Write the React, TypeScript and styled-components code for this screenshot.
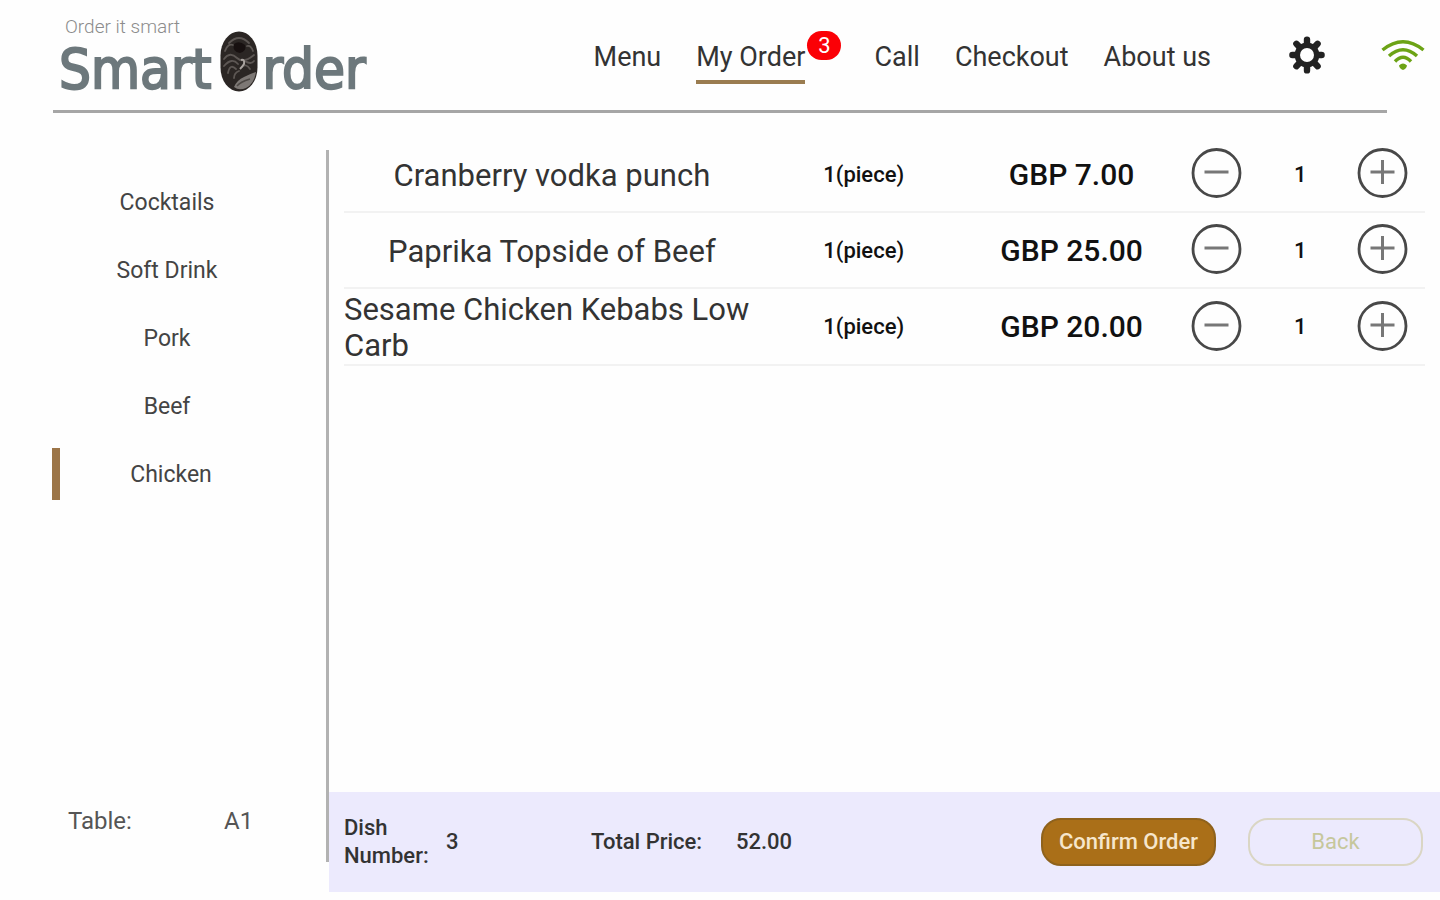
import React, { useState } from "react";
import styled, { createGlobalStyle } from "styled-components";

const GlobalStyle = createGlobalStyle`
  *, *::before, *::after { box-sizing: border-box; }
  body {
    margin: 0;
    background: #fefefe;
    color: #333;
    font-family: Roboto, "Liberation Sans", sans-serif;
  }
  button { font: inherit; cursor: pointer; }
`;

const Page = styled.div`
  display: flex;
  flex-direction: column;
  min-height: 100vh;
  padding-bottom: 8px;
`;

const Header = styled.header`
  display: flex;
  align-items: center;
  height: 110px;
  padding: 0 15px 0 59px;
`;

const HeaderRule = styled.hr`
  width: auto;
  height: 3px;
  margin: 0 53px;
  border: 0;
  background: #a6a6a6;
`;

const Brand = styled.a`
  display: flex;
  flex-direction: column;
  margin-right: auto;
  color: #6d787c;
  text-decoration: none;
`;

const Tagline = styled.span`
  height: 12px;
  padding-left: 6px;
  font-size: 19px;
  font-weight: 300;
  line-height: 16px;
  color: #8c8c8c;
`;

const Wordmark = styled.span`
  display: flex;
  align-items: flex-start;
  height: 60px;
  font-family: "DejaVu Sans Condensed", "DejaVu Sans", sans-serif;
  font-size: 56px;
  line-height: 76px;
  -webkit-text-stroke: 2px currentColor;

  svg { margin: 0 4px 0 9px; }
`;

const Nav = styled.nav`
  display: flex;
  gap: 35px;
  margin-right: 78px;
`;

const NavLink = styled.a<{ $active?: boolean }>`
  position: relative;
  height: 58px;
  margin-right: ${(p) => (p.$active ? "34px" : "0")};
  border-bottom: 4px solid ${(p) => (p.$active ? "#9a7c50" : "transparent")};
  font-size: 27px;
  line-height: 62px;
  color: #333;
  text-decoration: none;
  white-space: nowrap;
`;

const Badge = styled.span`
  position: absolute;
  top: 5px;
  left: 100%;
  width: 34px;
  height: 29px;
  margin-left: 2px;
  border-radius: 15px;
  background: #fb0006;
  color: #fff;
  font-size: 22px;
  line-height: 29px;
  text-align: center;
`;

const IconButton = styled.button`
  display: flex;
  padding: 0;
  border: 0;
  background: none;
`;

const Signal = styled.span`
  display: flex;
  margin-left: 56px;
`;

const Body = styled.div`
  display: flex;
  flex: 1;
`;

const Sidebar = styled.aside`
  display: flex;
  flex: 0 0 329px;
  flex-direction: column;
  margin: 37px 0 30px;
  padding: 26px 0 13px 52px;
  border-right: 3px solid #b2b2b2;
`;

const CategoryList = styled.ul`
  display: flex;
  flex-direction: column;
  gap: 16px;
  margin: 0;
  padding: 0;
  list-style: none;
`;

const Category = styled.button<{ $active?: boolean }>`
  display: block;
  width: 100%;
  height: 52px;
  padding: 0 44px 0 0;
  border: 0;
  border-left: ${(p) => (p.$active ? "8px solid #9c7548" : "0")};
  background: none;
  color: #444;
  font-size: 23px;
`;

const TableInfo = styled.dl`
  display: grid;
  grid-template-columns: 156px 1fr;
  margin: auto 0 0;
  padding-left: 16px;
  color: #555;
  font-size: 24px;
  line-height: 56px;

  dt, dd { margin: 0; }
`;

const Main = styled.main`
  display: flex;
  flex: 1;
  flex-direction: column;
  min-width: 0;
`;

const OrderArea = styled.div`
  flex: 1;
  padding: 24px 15px 24px 15px;
`;

const OrderTable = styled.table`
  width: 100%;
  border-spacing: 0;
  table-layout: fixed;
`;

const Cell = styled.td<{ $size?: number; $weight?: number }>`
  height: 76px;
  padding: 0;
  border-bottom: 2px solid #f2f2f2;
  color: #111;
  font-size: ${(p) => p.$size ?? 22}px;
  font-weight: ${(p) => p.$weight ?? 500};
  text-align: center;
  white-space: nowrap;
`;

const DishName = styled.th`
  height: 76px;
  padding: 3px 0 0;
  border-bottom: 2px solid #f2f2f2;
  color: #333;
  font-size: 31px;
  font-weight: 400;
  line-height: 36px;

  span { display: inline-block; text-align: left; vertical-align: middle; }
`;

const RoundButton = styled.button`
  display: inline-flex;
  padding: 0;
  border: 0;
  background: none;
  vertical-align: middle;
`;

const Footer = styled.footer`
  display: flex;
  align-items: center;
  height: 100px;
  padding: 0 17px 0 15px;
  background: #eceafd;
  color: #333;
  font-size: 22px;
  font-weight: 500;
  line-height: 28px;
`;

const Summary = styled.dl`
  display: flex;
  align-items: center;
  margin: 0 auto 0 0;

  dt, dd { margin: 0; }
`;

const DishLabel = styled.dt`
  width: 102px;
`;

const DishCount = styled.dd`
  width: 145px;
`;

const TotalLabel = styled.dt`
  width: 145px;
`;

const Action = styled.button<{ $primary?: boolean }>`
  width: 175px;
  height: 48px;
  margin-left: 32px;
  padding: 0;
  border: 2px solid ${(p) => (p.$primary ? "#8f621c" : "#dad6c4")};
  border-radius: 20px;
  background: ${(p) => (p.$primary ? "#aa6f18" : "transparent")};
  color: ${(p) => (p.$primary ? "#f6e6cc" : "#c6c79c")};
  font-size: 22px;
  font-weight: ${(p) => (p.$primary ? 500 : 400)};
`;

const PrintMark = () => (
  <svg width="38" height="61" viewBox="0 0 38 61" aria-hidden="true">
    <rect x="0.5" y="0.5" width="37" height="60" rx="18.5" ry="24" fill="#2b2624" />
    <g fill="none" stroke="#5d5754" strokeWidth="1.8" strokeLinecap="round">
      <path d="M9 12 Q19 2 29 12" />
      <path d="M5 20 Q8 12 13 14 M33 20 Q31 14 27 15" />
      <path d="M4 28 Q10 20 17 27 Q23 33 34 24" />
      <path d="M4 35 Q12 26 18 33" />
      <path d="M8 42 Q10 32 16 38 M14 47 Q14 42 19 40" />
      <path d="M25 30 Q31 34 34 30 M22 36 Q26 32 30 38" />
    </g>
    <path d="M14 56 Q17 49 24 46 Q32 42 36 41 Q34 53 26 57 Q19 60 14 56 Z" fill="#7d7875" />
    <path d="M17 55 Q20 51 30 48" fill="none" stroke="#4d4845" strokeWidth="1.4" />
    <path d="M21 29 Q25 28 24 33 Q22 36 20 38" fill="none" stroke="#aaa4a0" strokeWidth="2" />
    <path d="M14 13 Q19 9 25 14 Q27 20 20 22 Q12 21 14 13 Z" fill="#171010" />
  </svg>
);

const GearIcon = () => (
  <svg width="36" height="38" viewBox="-18 -19 36 38" aria-hidden="true">
    <g stroke="#222" strokeWidth="6.4" strokeLinecap="round">
      <path d="M0 -15.4 V15.4 M-14.6 0 H14.6 M-10.6 -11.2 L10.6 11.2 M10.6 -11.2 L-10.6 11.2" />
    </g>
    <circle r="12.4" fill="#222" />
    <circle r="7" fill="#fefefe" />
  </svg>
);

const SignalIcon = () => (
  <svg width="44" height="32" viewBox="0 0 44 32" aria-hidden="true">
    <g fill="none" stroke="#6ca315" strokeWidth="3.4">
      <path d="M1.5 11 Q22 -5.5 42.5 11" />
      <path d="M8 17 Q22 4.5 36 17" />
      <path d="M14 22.5 Q22 14 30 22.5" />
    </g>
    <path d="M18 26.5 Q22 22.5 26 26.5 Q25.500 29.500 22 31 Q18.500 29.500 18 26.500 Z" fill="#6ca315" />
  </svg>
);

const StepIcon = ({ plus = false }: { plus?: boolean }) => (
  <svg width="52" height="52" viewBox="0 0 52 52" fill="none" aria-hidden="true">
    <circle cx="25.5" cy="25" r="23.5" stroke="#484848" strokeWidth="2.8" />
    <path d="M13.5 24 H37.5" stroke="#777" strokeWidth="3" />
    {plus && <path d="M25.5 12 V36" stroke="#777" strokeWidth="3" />}
  </svg>
);

const categories = ["Cocktails", "Soft Drink", "Pork", "Beef", "Chicken"];

const initialOrder = [
  { name: "Cranberry vodka punch", price: 7, count: 1 },
  { name: "Paprika Topside of Beef", price: 25, count: 1 },
  { name: "Sesame Chicken Kebabs Low Carb", price: 20, count: 1 },
];

export default function App() {
  const [category, setCategory] = useState("Chicken");
  const [order, setOrder] = useState(initialOrder);

  const change = (name: string, by: number) =>
    setOrder((rows) =>
      rows.map((r) => (r.name === name ? { ...r, count: Math.max(0, r.count + by) } : r))
    );

  const dishes = order.reduce((sum, r) => sum + r.count, 0);
  const total = order.reduce((sum, r) => sum + r.count * r.price, 0);

  return (
    <>
      <GlobalStyle />
      <Page>
        <Header>
          <Brand href="#home">
            <Tagline>Order it smart</Tagline>
            <Wordmark>
              Smart
              <PrintMark />
              rder
            </Wordmark>
          </Brand>
          <Nav>
            <NavLink href="#menu">Menu</NavLink>
            <NavLink href="#order" $active aria-current="page">
              My Order
              <Badge>{dishes}</Badge>
            </NavLink>
            <NavLink href="#call">Call</NavLink>
            <NavLink href="#checkout">Checkout</NavLink>
            <NavLink href="#about">About us</NavLink>
          </Nav>
          <IconButton type="button" aria-label="Settings">
            <GearIcon />
          </IconButton>
          <Signal role="img" aria-label="Connected">
            <SignalIcon />
          </Signal>
        </Header>
        <HeaderRule />
        <Body>
          <Sidebar>
            <CategoryList>
              {categories.map((c) => (
                <li key={c}>
                  <Category type="button" $active={c === category} onClick={() => setCategory(c)}>
                    {c}
                  </Category>
                </li>
              ))}
            </CategoryList>
            <TableInfo>
              <dt>Table:</dt>
              <dd>A1</dd>
            </TableInfo>
          </Sidebar>
          <Main>
            <OrderArea>
              <OrderTable>
                <colgroup>
                  <col style={{ width: `${500 / 13}%` }} />
                  <col style={{ width: `${250 / 13}%` }} />
                  <col style={{ width: `${250 / 13}%` }} />
                  <col />
                  <col />
                  <col />
                </colgroup>
                <tbody>
                  {order.map((r) => (
                    <tr key={r.name}>
                      <DishName scope="row">
                        <span>{r.name}</span>
                      </DishName>
                      <Cell>1(piece)</Cell>
                      <Cell $size={30}>GBP {r.price.toFixed(2)}</Cell>
                      <Cell>
                        <RoundButton type="button" aria-label={`Remove one ${r.name}`} onClick={() => change(r.name, -1)}>
                          <StepIcon />
                        </RoundButton>
                      </Cell>
                      <Cell>{r.count}</Cell>
                      <Cell>
                        <RoundButton type="button" aria-label={`Add one ${r.name}`} onClick={() => change(r.name, 1)}>
                          <StepIcon plus />
                        </RoundButton>
                      </Cell>
                    </tr>
                  ))}
                </tbody>
              </OrderTable>
            </OrderArea>
            <Footer>
              <Summary>
                <DishLabel>Dish Number:</DishLabel>
                <DishCount>{dishes}</DishCount>
                <TotalLabel>Total Price:</TotalLabel>
                <dd>{total.toFixed(2)}</dd>
              </Summary>
              <Action type="button" $primary>Confirm Order</Action>
              <Action type="button">Back</Action>
            </Footer>
          </Main>
        </Body>
      </Page>
    </>
  );
}
